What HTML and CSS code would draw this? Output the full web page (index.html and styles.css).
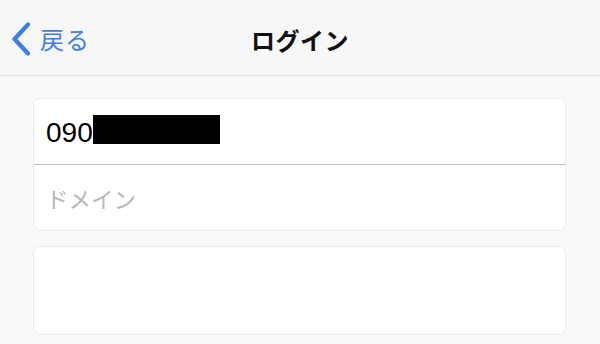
FILE: index.html
```html
<!DOCTYPE html>
<html lang="ja">
<head>
<meta charset="utf-8">
<link rel="stylesheet" href="styles.css">
</head>
<body>
<header class="nav">
  <a class="back">
    <svg class="chev" width="20" height="34" viewBox="0 0 20 34"><path d="M17 2.5 L3.5 17 L17 31.5" fill="none" stroke="#3d7ee6" stroke-width="4.2" stroke-linecap="round" stroke-linejoin="round"/></svg>
    <span class="back-text">戻る</span>
  </a>
  <h1 class="title">ログイン</h1>
</header>
<main class="content">
  <section class="card">
    <div class="row"><span class="num">090</span><span class="redact"></span></div>
    <div class="divider"></div>
    <div class="row"><span class="ph">ドメイン</span></div>
  </section>
  <section class="card card2"></section>
</main>
</body>
</html>
```
FILE: styles.css
```css
html, body { margin: 0; padding: 0; }
body {
  width: 600px;
  height: 344px;
  overflow: hidden;
  background: #f9f9f9;
  font-family: "Noto Sans CJK JP", "Liberation Sans", sans-serif;
}
.nav {
  position: relative;
  height: 75px;
  border-bottom: 1px solid #e4e4e4;
  background: #f7f7f7;
  display: flex;
  align-items: center;
  justify-content: center;
}
.back {
  position: absolute;
  left: 11px;
  top: 22px;
  display: flex;
  align-items: center;
  gap: 9px;
  color: #3d7ee6;
}
.chev { display: block; }
.back-text {
  font-size: 24px;
  line-height: 34px;
  letter-spacing: 1px;
}
.title {
  margin: 4px 0 0 0;
  font-size: 24px;
  font-weight: 700;
  color: #111;
  letter-spacing: 0.5px;
}
.content {
  padding: 22px 34px 0 33px;
  display: flex;
  flex-direction: column;
  gap: 15px;
}
.card {
  background: #fff;
  border: 1px solid #ebebeb;
  border-radius: 7px;
}
.row {
  height: 65px;
  display: flex;
  align-items: center;
  padding-left: 12px;
}
.num {
  font-family: "Liberation Sans", Arial, sans-serif;
  font-size: 28px;
  color: #000;
  line-height: 1;
  display: flex;
  align-items: center;
  margin-top: 2px;
}
.redact {
  display: inline-block;
  width: 127px;
  height: 29px;
  background: #000;
  margin-top: -4px;
}
.divider {
  height: 1px;
  background: #bdbdbd;
}
.ph {
  font-size: 22.5px;
  color: #b8b8b8;
}
.card2 { height: 87px; }
```
